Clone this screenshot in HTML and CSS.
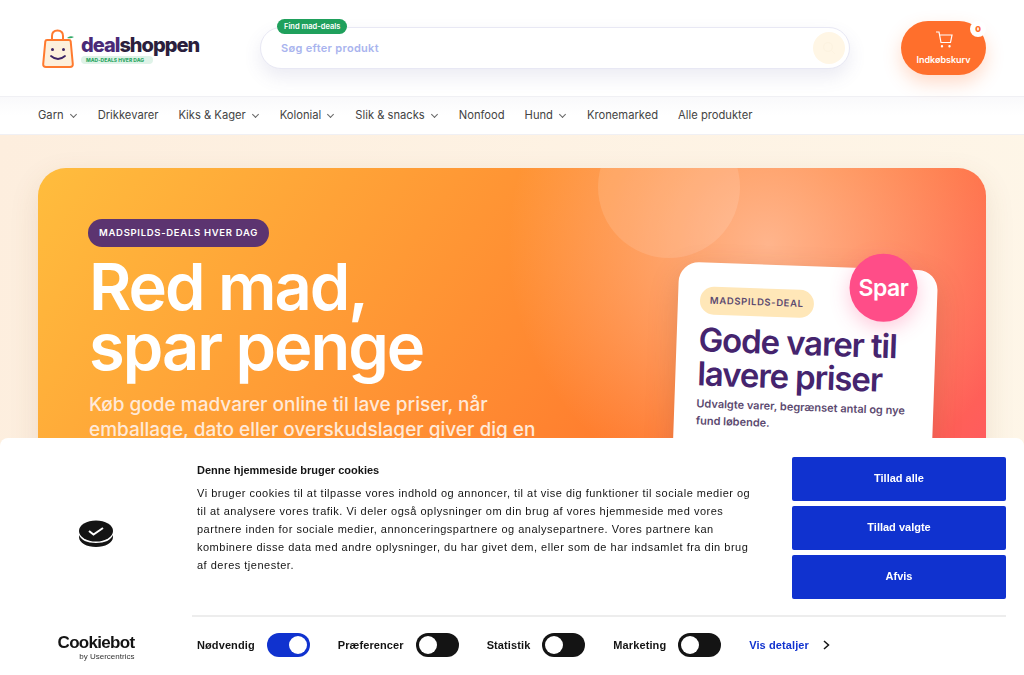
FILE: index.html
```html
<html>
	<head>
		<meta charset="utf-8">
		<link rel="stylesheet" href="styles.css">
	</head>
	<body>
		<div id="header">
			<a class="logo" href="#">
				<svg class="logo-bag" width="34" height="40" viewBox="0 0 34 40">
					<path d="M25 9 Q28 6 32 8 Q29 10 25 9Z" fill="#2fa866"/>
					<path d="M10 12 V7 Q10 1.500 15.500 1.500 Q21 1.500 21 7 V12" fill="none" stroke="#ff7a2f" stroke-width="2"/>
					<path d="M5 11 H27 Q28.500 11 28.700 12.500 L30.800 35 Q31 38 28 38 H4 Q1 38 1.200 35 L3.300 12.500 Q3.500 11 5 11Z" fill="#fdf0dc" stroke="#ff7a2f" stroke-width="2"/>
					<circle cx="10.500" cy="20.500" r="1.500" fill="#3d2466"/>
					<circle cx="21.500" cy="20.500" r="1.500" fill="#3d2466"/>
					<path d="M9 27 Q16 33 23 27" fill="none" stroke="#3d2466" stroke-width="1.800" stroke-linecap="round"/>
				</svg>
				<div class="logo-text">
					<div class="logo-name"><span>deal</span>shoppen</div>
					<div class="logo-tag">MAD-DEALS HVER DAG</div>
				</div>
			</a>
			<div class="search">
				<span class="search-label">Find mad-deals</span>
				<span class="search-text">Søg efter produkt</span>
				<span class="search-btn">
					<svg width="14" height="14" viewBox="0 0 14 14" fill="none" stroke="#fdf3e0" stroke-width="1">
						<circle cx="6" cy="6" r="4.500"/>
						<path d="M9.500 9.500 L13 13"/>
					</svg>
				</span>
			</div>
			<a class="cart" href="#">
				<svg width="18" height="17" viewBox="0 0 18 17" fill="none" stroke="#fff" stroke-width="1.200">
					<path d="M1 1 H4 L6 11.500 H15.500 L17 4 H4.800"/>
					<circle cx="7" cy="15.300" r=".6"/>
					<circle cx="14.500" cy="15.300" r=".6"/>
				</svg>
				<span>Indkøbskurv</span>
				<b class="cart-count">0</b>
			</a>
		</div>
		<div id="navbar">
			<a href="#" class="drop">Garn</a>
			<a href="#">Drikkevarer</a>
			<a href="#" class="drop">Kiks &amp; Kager</a>
			<a href="#" class="drop">Kolonial</a>
			<a href="#" class="drop">Slik &amp; snacks</a>
			<a href="#">Nonfood</a>
			<a href="#" class="drop">Hund</a>
			<a href="#">Kronemarked</a>
			<a href="#">Alle produkter</a>
		</div>
		<div id="content">
			<div class="hero">
				<div class="hero-circle"></div>
				<div class="hero-left">
					<span class="hero-pill">MADSPILDS-DEALS HVER DAG</span>
					<h1>Red mad,<br>spar penge</h1>
					<p>Køb gode madvarer online til lave priser, når emballage, dato eller overskudslager giver dig en</p>
				</div>
				<div class="deal-card">
					<span class="deal-pill">MADSPILDS-DEAL</span>
					<h2>Gode varer til lavere priser</h2>
					<p>Udvalgte varer, begrænset antal og nye fund løbende.</p>
					<div class="deal-badge">Spar</div>
				</div>
			</div>
		</div>
		<div id="cookies">
			<div class="cb-brand">
				<svg class="cb-mark" width="36" height="28" viewBox="0 0 36 28">
					<path d="M1 15 V17 C1 23 9 27 18 27 C27 27 35 23 35 17 V15 C33 20 27 23 18 23 C9 23 3 20 1 15Z" fill="#141414"/>
					<ellipse cx="18" cy="11" rx="17" ry="10.500" fill="#141414"/>
					<path d="M11 11 L15.500 14.500 L25 8" fill="none" stroke="#fff" stroke-width="2"/>
				</svg>
				<div class="cb-logo">
					<div class="cb-name">Cookiebot</div>
					<div class="cb-by">by Usercentrics</div>
				</div>
			</div>
			<div class="cb-main">
				<div class="cb-top">
					<div class="cb-text">
						<h3>Denne hjemmeside bruger cookies</h3>
						<p>Vi bruger cookies til at tilpasse vores indhold og annoncer, til at vise dig funktioner til sociale medier og til at analysere vores trafik. Vi deler også oplysninger om din brug af vores hjemmeside med vores partnere inden for sociale medier, annonceringspartnere og analysepartnere. Vores partnere kan kombinere disse data med andre oplysninger, du har givet dem, eller som de har indsamlet fra din brug af deres tjenester.</p>
					</div>
					<div class="cb-buttons">
						<a href="#">Tillad alle</a>
						<a href="#">Tillad valgte</a>
						<a href="#">Afvis</a>
					</div>
				</div>
				<div class="cb-toggles">
					<span class="cb-label">Nødvendig</span><span class="toggle on"></span>
					<span class="cb-label">Præferencer</span><span class="toggle"></span>
					<span class="cb-label">Statistik</span><span class="toggle"></span>
					<span class="cb-label">Marketing</span><span class="toggle"></span>
					<a href="#" class="cb-details">Vis detaljer</a>
					<svg width="7" height="10" viewBox="0 0 7 10" fill="none" stroke="#141414" stroke-width="1.500"><path d="M1 1 L5.500 5 L1 9"/></svg>
				</div>
			</div>
		</div>
	</body>
</html>
```

FILE: styles.css
```css
html, body {
	margin: 0;
	height: 675px;
	overflow: hidden;
}
body {
	font-family: "Inter", sans-serif;
	color: #333;
	background-color: white;
}
a {
	text-decoration: none;
	color: inherit;
}
#header {
	height: 96px;
	display: flex;
	align-items: center;
	padding: 0 38px 0 42px;
	box-sizing: border-box;
}
.logo {
	display: flex;
	align-items: center;
	gap: 5px;
	width: 219px;
	margin-right: -1px;
	flex: none;
	margin-top: 2px;
}
.logo-name {
	font-size: 20px;
	font-weight: 800;
	letter-spacing: -1px;
	line-height: 21px;
	color: #2b1f3d;
}
.logo-name span {
	color: #4a2a78;
}
.logo-tag {
	font-size: 5px;
	font-weight: 800;
	color: #2fa866;
	background-color: #dff3e8;
	border-radius: 5px;
	padding: 1px 5px;
	width: 62px;
	white-space: nowrap;
}
.search {
	position: relative;
	width: 590px;
	height: 42px;
	margin-top: -1px;
	flex: none;
	display: flex;
	align-items: center;
	justify-content: space-between;
	padding: 0 4px 0 20px;
	box-sizing: border-box;
	border: 1px solid #e8e8f4;
	border-radius: 21px;
	background-color: white;
	box-shadow: 0 8px 18px rgba(90, 90, 160, .12);
}
.search-label {
	position: absolute;
	top: -9px;
	left: 16px;
	height: 15px;
	line-height: 15px;
	padding: 0 7px;
	border-radius: 8px;
	background-color: #1fa05c;
	color: white;
	font-size: 7.500px;
	font-weight: 600;
}
.search-text {
	font-size: 11px;
	font-weight: 600;
	letter-spacing: .3px;
	color: #a9b4ee;
}
.search-btn {
	width: 32px;
	height: 32px;
	border-radius: 50%;
	background-color: #fff6e5;
	display: flex;
	align-items: center;
	justify-content: center;
}
.cart {
	position: relative;
	width: 85px;
	height: 54px;
	margin-left: auto;
	border-radius: 27px;
	background-color: #ff6f2c;
	box-shadow: 0 8px 18px rgba(255, 111, 44, .25);
	color: white;
	display: flex;
	flex-direction: column;
	align-items: center;
	justify-content: center;
	gap: 6px;
	font-size: 9px;
	font-weight: 600;
}
.cart-count {
	position: absolute;
	top: 0;
	right: 0;
	width: 16px;
	height: 16px;
	line-height: 16px;
	border-radius: 50%;
	text-align: center;
	background-color: white;
	color: #ff6f2c;
	font-size: 8px;
}
#navbar {
	height: 39px;
	box-sizing: border-box;
	display: flex;
	align-items: center;
	gap: 20px;
	padding: 0 38px 2px;
	border-top: 1px solid #f0f0f4;
	border-bottom: 1px solid #f0f0f4;
	background: linear-gradient(#f9f9fb, white 50%);
	font-size: 11.200px;
	color: #444;
}
#navbar a.drop:after {
	content: "";
	display: inline-block;
	width: 4px;
	height: 4px;
	margin: 0 2px 2px 7px;
	border-right: 1px solid #666;
	border-bottom: 1px solid #666;
	transform: rotate(45deg);
}
#content {
	height: 540px;
	box-sizing: border-box;
	padding: 33px 38px 0;
	background: linear-gradient(100deg, #fdeede, #fef6e8);
}
.hero {
	position: relative;
	height: 480px;
	border-radius: 28px;
	overflow: hidden;
	padding: 51px 50px;
	box-sizing: border-box;
	color: white;
	background: radial-gradient(circle at 77% 16%, rgba(255, 205, 180, .7), rgba(255, 180, 140, 0) 260px), linear-gradient(125deg, #ffbd3d 0%, #ff7a2e 62%, #ff4f72 100%);
	box-shadow: 0 10px 30px rgba(120, 80, 40, .12);
}
.hero-circle {
	position: absolute;
	left: 560px;
	top: -52px;
	width: 142px;
	height: 142px;
	border-radius: 50%;
	background-color: rgba(255, 255, 255, .12);
}
.hero-pill {
	display: inline-block;
	height: 28px;
	line-height: 28px;
	padding: 0 11px;
	border-radius: 14px;
	background-color: #5c3470;
	font-size: 9.500px;
	font-weight: 600;
	letter-spacing: .7px;
}
.hero h1 {
	margin: 10px 0 0 1px;
	font-size: 65px;
	line-height: 60px;
	font-weight: 600;
	letter-spacing: -2px;
}
.hero-left p {
	margin: 15px 0 0 1px;
	width: 470px;
	font-size: 19px;
	line-height: 25px;
	font-weight: 500;
	color: #ffe9d8;
}
.deal-card {
	position: absolute;
	left: 636px;
	top: 98px;
	width: 259px;
	height: 300px;
	padding: 24px 22px;
	box-sizing: border-box;
	background-color: white;
	border-radius: 20px;
	transform: rotate(2deg);
	box-shadow: 0 10px 30px rgba(120, 60, 40, .2);
}
.deal-pill {
	display: inline-block;
	height: 28px;
	line-height: 28px;
	padding: 0 10px;
	border-radius: 14px;
	background-color: #ffe7b8;
	color: #5c4a70;
	font-size: 9.500px;
	font-weight: 600;
	letter-spacing: .6px;
}
.deal-card h2 {
	margin: 8px 0 0;
	font-size: 33px;
	line-height: 34px;
	font-weight: 600;
	color: #45246e;
	letter-spacing: -1.100px;
}
.deal-card p {
	margin: 5px 0 0;
	font-size: 11px;
	line-height: 17px;
	font-weight: 600;
	color: #5c4a70;
}
.deal-badge {
	position: absolute;
	right: 20px;
	top: -15px;
	width: 68px;
	height: 68px;
	line-height: 68px;
	text-align: center;
	border-radius: 50%;
	background-color: #ff4d88;
	box-shadow: 0 6px 20px rgba(255, 77, 136, .3);
	color: white;
	font-size: 23px;
	font-weight: 600;
	letter-spacing: -.5px;
	transform: rotate(-2deg);
}
#cookies {
	position: fixed;
	left: 0;
	right: 0;
	bottom: 0;
	height: 237px;
	display: flex;
	background-color: white;
	border-radius: 8px 8px 0 0;
	color: #141414;
	font-family: "Liberation Sans", sans-serif;
}
.cb-brand {
	width: 192px;
	flex: none;
	display: flex;
	flex-direction: column;
	align-items: center;
	padding-top: 82px;
	box-sizing: border-box;
}
.cb-logo {
	margin-top: 86px;
	text-align: right;
}
.cb-name {
	font-size: 17px;
	line-height: 18px;
	font-weight: 700;
	letter-spacing: -.7px;
}
.cb-by {
	font-size: 8px;
	line-height: 9px;
	color: #333;
}
.cb-main {
	width: 814px;
	flex: none;
}
.cb-top {
	display: flex;
	height: 177px;
	border-bottom: 2px solid #ededed;
}
.cb-text {
	width: 600px;
	flex: none;
	padding: 25px 0 0 5px;
	box-sizing: border-box;
}
.cb-text h3 {
	margin: 0 0 7px;
	font-size: 11px;
	line-height: 14px;
}
.cb-text p {
	margin: 0;
	width: 558px;
	font-size: 11px;
	line-height: 18px;
	letter-spacing: .5px;
}
.cb-toggles {
	display: flex;
	align-items: center;
	height: 56px;
	padding-left: 5px;
	font-size: 11px;
	font-weight: 700;
	letter-spacing: .1px;
}
.cb-label {
	margin-right: 12px;
}
.toggle {
	position: relative;
	width: 43px;
	height: 24px;
	flex: none;
	border-radius: 12px;
	background-color: #141414;
	margin-right: 28px;
}
.toggle:after {
	content: "";
	position: absolute;
	left: 3px;
	top: 3px;
	width: 18px;
	height: 18px;
	border-radius: 50%;
	background-color: white;
}
.toggle.on {
	background-color: #1032cf;
}
.toggle.on:after {
	left: 22px;
}
.cb-details {
	color: #1032cf;
	margin-right: 14px;
}
.cb-buttons {
	width: 214px;
	padding-top: 19px;
	display: flex;
	flex-direction: column;
	gap: 5px;
}
.cb-buttons a {
	height: 44px;
	line-height: 43px;
	text-align: center;
	background-color: #1032cf;
	color: white;
	font-size: 11px;
	font-weight: 700;
	border-radius: 2px;
}
```
